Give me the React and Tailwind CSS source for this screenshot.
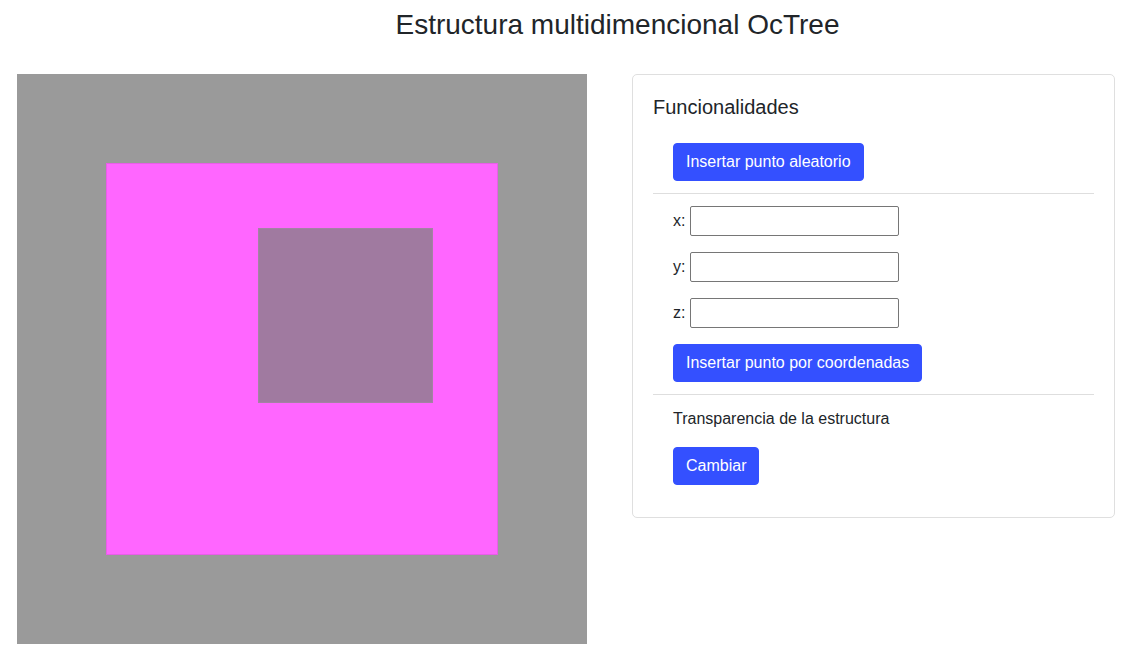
import { useState } from "react";

function Canvas3D() {
  return (
    <svg width="570" height="570" viewBox="0 0 570 570" className="block shrink-0">
      <rect x="0" y="0" width="570" height="570" fill="#9a9a9a" />
      <rect x="89.5" y="89.5" width="391" height="391" fill="#ff66ff" stroke="#e85ee8" strokeWidth="1" />
      <rect x="241.5" y="154.5" width="174" height="174" fill="#a07aa0" stroke="#a482a4" strokeWidth="1" />
    </svg>
  );
}

function CoordInput({ label }) {
  return (
    <div className="flex items-center h-[30px]">
      <label className="w-[17px]">{label}:</label>
      <input type="text" className="w-[209px] h-[30px] border border-[#767676] rounded-[2px] bg-white px-1 outline-none" />
    </div>
  );
}

function Btn({ children }) {
  return (
    <button className="h-[38px] px-[12px] rounded-[4px] bg-[#3450ff] text-white text-[16px] leading-[24px] border border-[#3450ff]">
      {children}
    </button>
  );
}

export default function App() {
  const [alpha, setAlpha] = useState(false);

  return (
    <div className="w-[1145px] h-[654px] bg-white text-[#212529] font-['Liberation_Sans',Arial,sans-serif] text-[16px] leading-[24px] overflow-hidden">
      <h1 className="text-[28px] leading-[34px] text-center pt-[8px] pl-[90px]">Estructura multidimencional OcTree</h1>
      <div className="flex mt-[32px] pl-[17px] gap-[45px]">
        <Canvas3D />
        <div className="w-[483px] self-start border border-[#dfdfdf] rounded-[5px] p-[20px] pb-[32px]">
          <h5 className="text-[20px] leading-[24px]">Funcionalidades</h5>
          <div className="pl-[20px] mt-[24px]">
            <Btn>Insertar punto aleatorio</Btn>
          </div>
          <div className="h-px bg-[#dedede] mt-[12px]" />
          <div className="pl-[20px] mt-[12px] flex flex-col gap-[16px] items-start">
            <CoordInput label="x" />
            <CoordInput label="y" />
            <CoordInput label="z" />
            <Btn>Insertar punto por coordenadas</Btn>
          </div>
          <div className="h-px bg-[#dedede] mt-[12px]" />
          <div className="pl-[20px] mt-[12px]">
            <p>Transparencia de la estructura</p>
            <div className="mt-[16px]" onClick={() => setAlpha(!alpha)}>
              <Btn>Cambiar</Btn>
            </div>
          </div>
        </div>
      </div>
    </div>
  );
}
